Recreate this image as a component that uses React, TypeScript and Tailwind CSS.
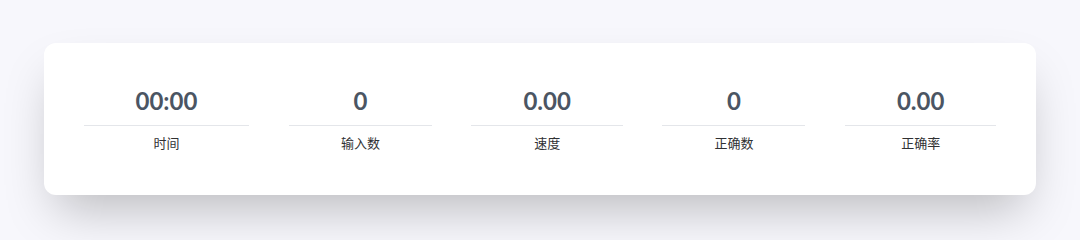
import React from 'react';

const stats = [
  { value: '00:00', label: '时间' },
  { value: '0', label: '输入数' },
  { value: '0.00', label: '速度' },
  { value: '0', label: '正确数' },
  { value: '0.00', label: '正确率' },
];

export default function App() {
  return (
    <div className="min-h-screen bg-[#f7f7fc] px-[44px] pt-[43px]">
      <div className="flex justify-evenly rounded-xl bg-white py-[42px] shadow-2xl">
        {stats.map((item) => (
          <div key={item.label} className="flex flex-col text-center">
            <div className="border-b border-[#e4e6ea] px-[52px] pb-2 font-['Lato','Noto_Sans',sans-serif] text-[24px] font-bold leading-8 text-[#4b5563]">
              {item.value}
            </div>
            <div className="px-[52px] pt-[7px] font-['Noto_Sans_CJK_SC',sans-serif] text-[13px] leading-5 text-[#303133]">
              {item.label}
            </div>
          </div>
        ))}
      </div>
    </div>
  );
}
